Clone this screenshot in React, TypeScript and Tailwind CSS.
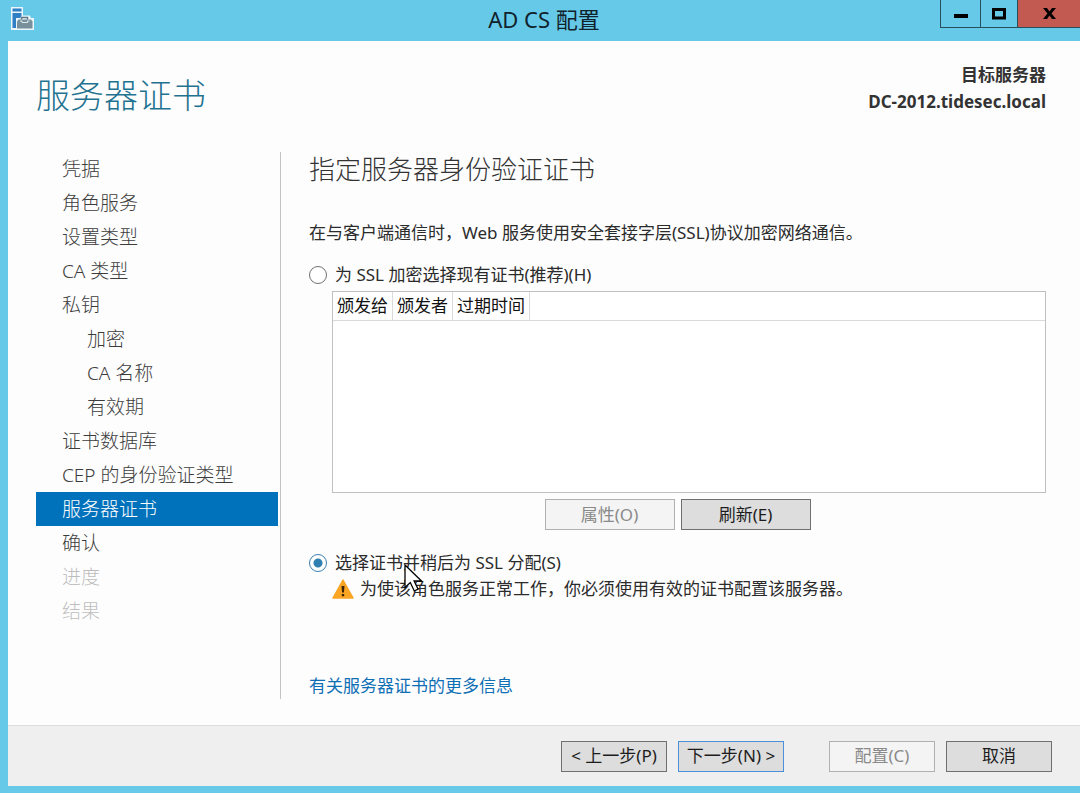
import { clsx } from 'clsx'

const steps = [
  { label: '凭据' },
  { label: '角色服务' },
  { label: '设置类型' },
  { label: 'CA 类型' },
  { label: '私钥' },
  { label: '加密', sub: true },
  { label: 'CA 名称', sub: true },
  { label: '有效期', sub: true },
  { label: '证书数据库' },
  { label: 'CEP 的身份验证类型' },
  { label: '服务器证书', active: true },
  { label: '确认' },
  { label: '进度', disabled: true },
  { label: '结果', disabled: true },
]

const columns = ['颁发给', '颁发者', '过期时间']

function ServerIcon() {
  return (
    <svg width="23" height="23" viewBox="0 0 23 23" aria-hidden="true">
      <path d="M0 0h12v8.500h7l1 2.500h3v12H0z" fill="#eaf6fb" />
      <path d="M1.500 1.500h9v3h-9zM1.500 6h9v3L9 11H5v10H1.500z" fill="#2f7fc4" />
      <path d="M10.500 12.500v-2h6v2" fill="none" stroke="#5f7886" strokeWidth="1.500" />
      <path d="M7.500 12.500h12.500l1.500 2v7H6v-7z" fill="#78909c" />
      <path d="M9 14h2v1.500h5.500V14h2" fill="none" stroke="#dbe9ef" />
    </svg>
  )
}

function TitleBar() {
  return (
    <header className="relative flex h-[41px] shrink-0 items-start pl-[11px]">
      <div className="pt-[7px]">
        <ServerIcon />
      </div>
      <h1 className="absolute inset-x-0 top-0 pl-2 text-center text-[22px] leading-[38px] text-[#10222b]">AD CS 配置</h1>
      <div className="relative ml-auto flex h-7 border-b border-l border-[#27505f]">
        <button aria-label="最小化" className="flex w-10 items-center justify-center border-r border-[#27505f]">
          <svg width="14" height="14" viewBox="0 0 14 14">
            <path d="M0 7h14v4H0z" fill="#000" />
          </svg>
        </button>
        <button aria-label="最大化" className="flex w-9 items-center justify-center">
          <svg width="14" height="12" viewBox="0 0 14 12">
            <path d="M1.500 1.500h11v8.500h-11z" fill="none" stroke="#000" strokeWidth="3" />
          </svg>
        </button>
        <button aria-label="关闭" className="flex w-[63px] items-center justify-center border-l border-[#27505f] bg-[#c25a52]">
          <svg width="13" height="11" viewBox="0 0 13 11">
            <path d="M0 0h4l2.500 3.500L9 0h4L8.500 5.500 13 11H9L6.500 7.500 4 11H0l4.500-5.500z" fill="#000" />
          </svg>
        </button>
      </div>
    </header>
  )
}

function StepNav() {
  return (
    <nav className="w-[245px] shrink-0 border-r border-[#c3c3c3] pr-0.5">
      <ul>
        {steps.map((step) => (
          <li
            key={step.label}
            className={clsx(
              'h-[34px] text-[19px] leading-[34px] font-light',
              step.sub ? 'pl-[51px]' : 'pl-[26px]',
              step.active && 'bg-[#0072bc] text-white',
              step.disabled && 'text-[#bdbdbd]',
              !step.active && !step.disabled && 'text-[#3c3c3c]'
            )}
          >
            {step.label}
          </li>
        ))}
      </ul>
    </nav>
  )
}

function CertificateList() {
  return (
    <div className="ml-[23px] h-[202px] border border-[#c0c0c0] bg-white">
      <table className="w-full border-collapse text-[17px] text-[#111]">
        <thead>
          <tr className="h-7 border-b border-[#d9d9d9]">
            {columns.map((name) => (
              <th key={name} scope="col" className="border-r border-[#dadada] px-1 font-normal whitespace-nowrap">
                {name}
              </th>
            ))}
            <td className="w-full"></td>
          </tr>
        </thead>
      </table>
    </div>
  )
}

function WarningIcon() {
  return (
    <svg width="22" height="20" viewBox="0 0 22 20" aria-hidden="true" className="shrink-0">
      <path d="M11 1 21 19H1z" fill="#fba524" stroke="#fba524" strokeWidth="1.500" strokeLinejoin="round" />
      <path d="M9.500 7h3l-.6 6.500h-1.800zM9.800 15h2.400v2.300H9.800z" fill="#3a2405" />
    </svg>
  )
}

function MousePointer() {
  return (
    <svg width="19" height="29" viewBox="0 0 19 29" aria-hidden="true" className="absolute top-3.5 left-[95px] z-10">
      <path d="M1 1v22.500l5.300-5 4 8.500 3.800-1.800-4-8.200H17.500z" fill="#fff" stroke="#000" strokeWidth="1.300" />
    </svg>
  )
}

const radioClass =
  'm-0 size-[18px] shrink-0 appearance-none rounded-full border border-[#707070] bg-white checked:border-[#3c7fb1] checked:bg-[radial-gradient(circle,#2f7fb0_4px,#fff_5px)]'

const buttonClass =
  'h-[31px] border text-[17px] whitespace-pre bg-[#dddddd] text-[#1c1c1c] disabled:border-[#b0b0b0] disabled:bg-[#f4f4f4] disabled:text-[#8a8a8a]'

export default function App() {
  return (
    <div className="flex min-h-screen flex-col bg-[#66c9e8] pb-[7px] font-['Noto_Sans','Noto_Sans_CJK_SC',sans-serif]">
      <TitleBar />
      <div className="ml-2 flex flex-1 flex-col bg-[#fdfdfd]">
        <div className="flex h-[111px] items-start justify-between pt-5 pr-[34px] pl-7">
          <h2 className="pt-2 text-[34px] leading-[52px] font-light text-[#1f7391]">服务器证书</h2>
          <div className="text-right text-[17px] leading-[27px] font-bold text-[#333]">
            <p>目标服务器</p>
            <p>DC-2012.tidesec.local</p>
          </div>
        </div>

        <div className="flex flex-1 pr-[34px] pb-[26px] pl-7">
          <StepNav />
          <main className="min-w-0 flex-1 pl-7 text-[17px] leading-[26px] text-[#2b2b2b]">
            <h3 className="text-[26px] leading-[34px] font-light text-[#333]">指定服务器身份验证证书</h3>
            <p className="mt-[34px]">在与客户端通信时，Web 服务使用安全套接字层(SSL)协议加密网络通信。</p>
            <label className="mt-4 mb-[3px] flex items-center gap-2">
              <input type="radio" name="cert" className={radioClass} />
              为 SSL 加密选择现有证书(推荐)(H)
            </label>
            <CertificateList />
            <div className="mt-1.5 flex justify-center gap-1.5">
              <button disabled className={clsx(buttonClass, 'w-[130px]')}>属性(O)</button>
              <button className={clsx(buttonClass, 'w-[130px] border-[#707070]')}>刷新(E)</button>
            </div>
            <div className="relative mt-5">
              <label className="flex items-center gap-2">
                <input type="radio" name="cert" defaultChecked className={radioClass} />
                选择证书并稍后为 SSL 分配(S)
              </label>
              <MousePointer />
            </div>
            <p className="ml-[23px] flex items-center gap-1.5">
              <WarningIcon />
              为使该角色服务正常工作，你必须使用有效的证书配置该服务器。
            </p>
            <a href="#" className="mt-[71px] block w-fit text-[#0f6fb5]">
              有关服务器证书的更多信息
            </a>
          </main>
        </div>

        <footer className="flex h-[61px] items-center justify-end border-t border-[#dcdcdc] bg-[#efefef] pr-7">
          <button className={clsx(buttonClass, 'mr-[11px] w-[106px] border-[#707070]')}>{'< 上一步(P)'}</button>
          <button className={clsx(buttonClass, 'mr-[45px] w-[106px] border-[#4a90d9]')}>{'下一步(N) >'}</button>
          <button disabled className={clsx(buttonClass, 'mr-[11px] w-[106px]')}>配置(C)</button>
          <button className={clsx(buttonClass, 'w-[106px] border-[#707070]')}>取消</button>
        </footer>
      </div>
    </div>
  )
}
